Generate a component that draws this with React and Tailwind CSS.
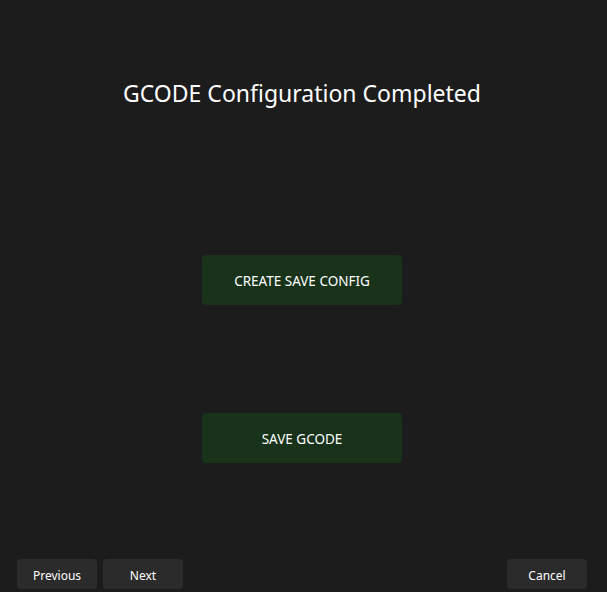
export default function App() {
  return (
    <div
      className="h-[592px] w-full bg-[#1c1c1c] text-white flex flex-col"
      style={{ fontFamily: '"Noto Sans", "Open Sans", sans-serif' }}
    >
      <div className="flex flex-col pr-[3px]">
        <h1 className="mt-[78px] text-center text-[23px] leading-[30px] font-normal">
          GCODE Configuration Completed
        </h1>

        <div className="flex flex-col items-center mt-[147px] gap-[108px]">
          <button className="w-[200px] h-[50px] pt-[2px] rounded-[4px] bg-[#18331a] text-[13.5px]">
            CREATE SAVE CONFIG
          </button>
          <button className="w-[200px] h-[50px] pt-[2px] rounded-[4px] bg-[#18331a] text-[13.5px]">
            SAVE GCODE
          </button>
        </div>
      </div>

      <div className="mt-auto flex items-center pl-[17px] pr-[20px] pb-[3px]">
        <div className="flex gap-[6px]">
          <button className="w-[80px] h-[30px] pt-[3px] rounded-[4px] bg-[#2b2b2b] text-[12px]">Previous</button>
          <button className="w-[80px] h-[30px] pt-[3px] rounded-[4px] bg-[#2b2b2b] text-[12px]">Next</button>
        </div>
        <button className="ml-auto w-[80px] h-[30px] pt-[3px] rounded-[4px] bg-[#2b2b2b] text-[12px]">Cancel</button>
      </div>
    </div>
  );
}
